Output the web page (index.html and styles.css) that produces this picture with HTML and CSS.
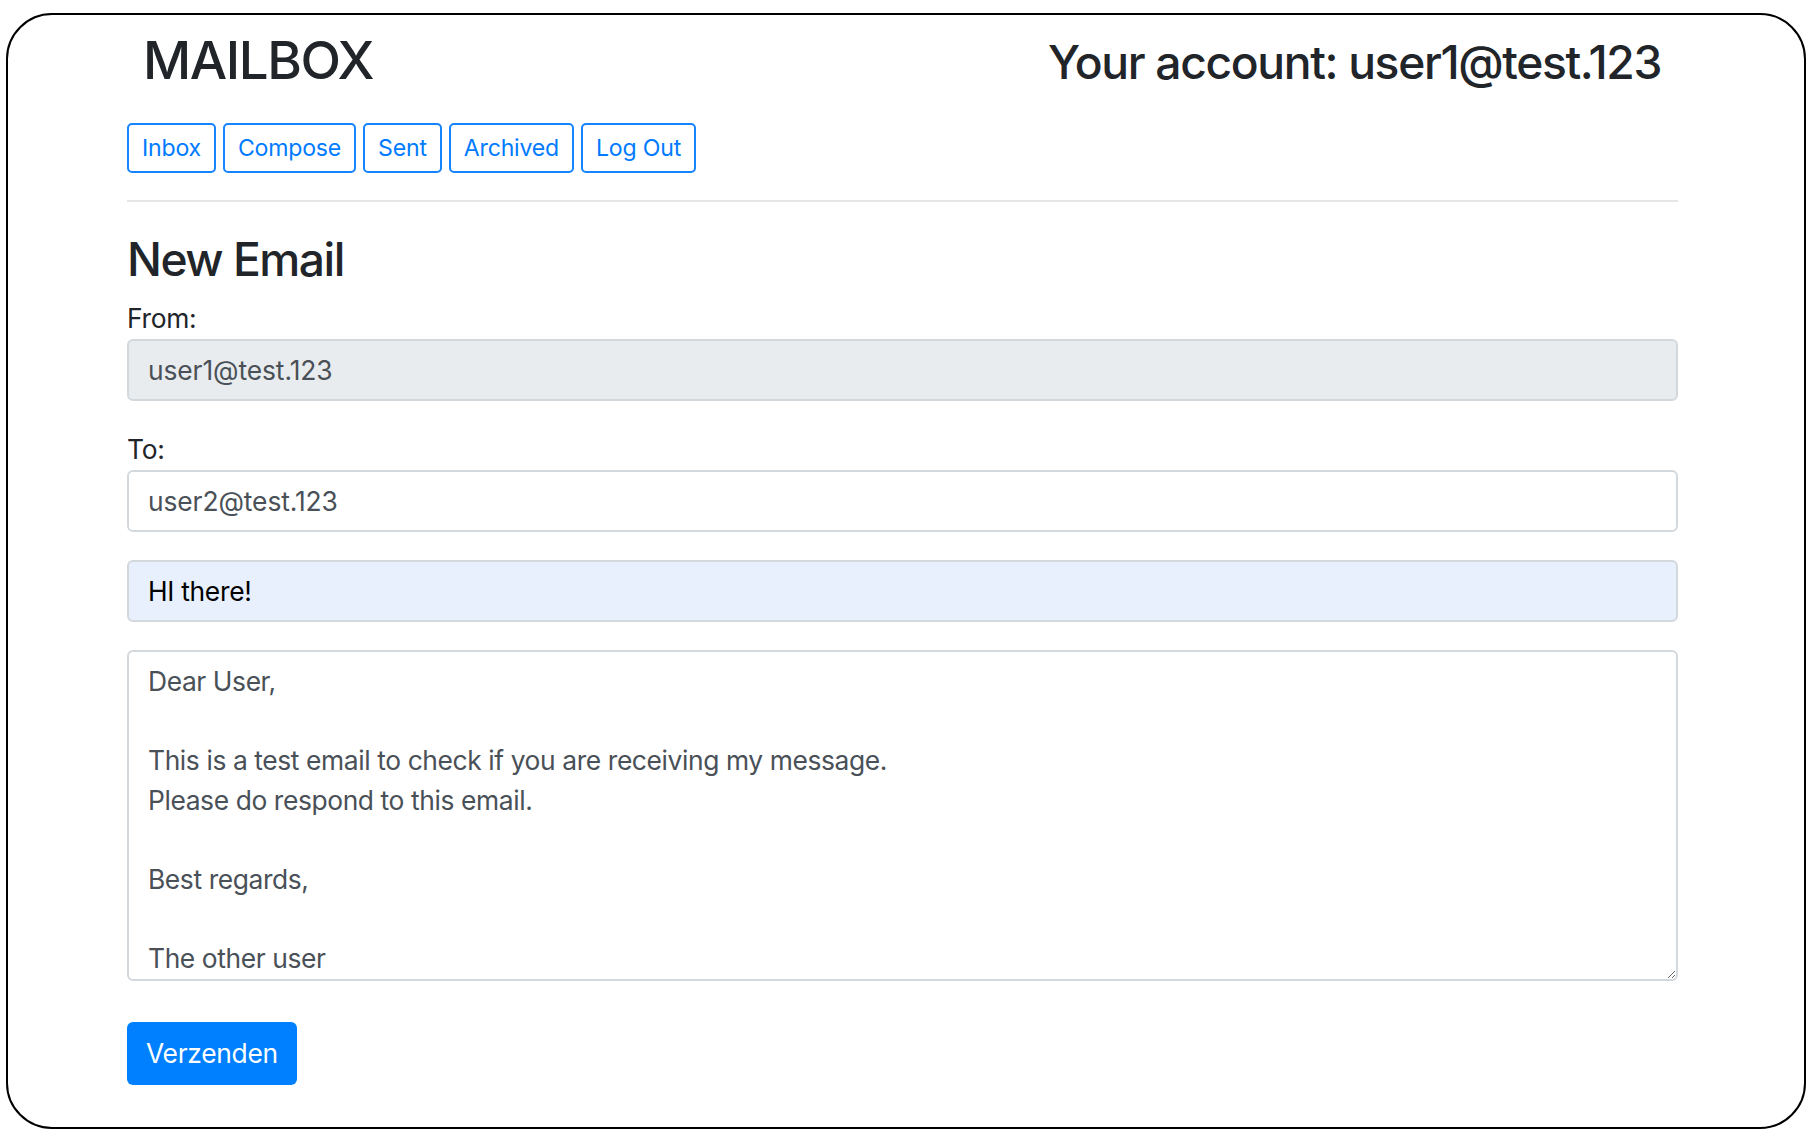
FILE: index.html
```html
<!DOCTYPE html>
<html lang="en">
<head>
<meta charset="utf-8">
<title>Mailbox</title>
<link rel="stylesheet" href="styles.css">
</head>
<body>
<div class="frame">
  <div class="container">
    <header class="top">
      <h2 class="brand">MAILBOX</h2>
      <h3 class="account">Your account: user1@test.123</h3>
    </header>
    <nav class="nav">
      <button class="btn-outline" type="button">Inbox</button>
      <button class="btn-outline" type="button">Compose</button>
      <button class="btn-outline" type="button">Sent</button>
      <button class="btn-outline" type="button">Archived</button>
      <button class="btn-outline" type="button">Log Out</button>
    </nav>
    <hr class="divider">
    <h3 class="title">New Email</h3>
    <form class="compose">
      <div class="group">
        <label class="label">From:</label>
        <input class="field field-disabled" disabled value="user1@test.123">
      </div>
      <div class="group">
        <label class="label">To:</label>
        <input class="field" value="user2@test.123">
      </div>
      <div class="group">
        <input class="field field-autofill" value="HI there!">
      </div>
      <div class="group group-body">
        <textarea class="field field-body">Dear User,

This is a test email to check if you are receiving my message.
Please do respond to this email.

Best regards,

The other user</textarea>
      </div>
      <button class="btn-primary" type="button">Verzenden</button>
    </form>
  </div>
</div>
</body>
</html>
```

FILE: styles.css
```css
* { box-sizing: border-box; }

html, body {
  margin: 0;
  padding: 0;
  background: #fff;
}

body {
  font-family: Inter, "Liberation Sans", sans-serif;
  color: #212529;
  font-size: 26.4px;
  line-height: 1.5;
}

.frame {
  margin: 13px 0 0 6px;
  width: 1800px;
  height: 1116px;
  border: 2px solid #000;
  border-radius: 46px;
  background: #fff;
  overflow: hidden;
}

.container {
  margin-left: 119px;
  width: 1551px;
  padding-top: 14px;
}

.top {
  display: flex;
  justify-content: space-between;
  align-items: baseline;
  padding: 0 17px 0 16px;
  margin-bottom: 31px;
}

.brand {
  margin: 0;
  font-size: 52.8px;
  line-height: 1.2;
  font-weight: 500;
  letter-spacing: -1.4px;
  color: #212529;
}

.account {
  margin: 0;
  font-size: 46.2px;
  line-height: 1.2;
  font-weight: 500;
  letter-spacing: -1.35px;
  color: #212529;
}

.nav {
  display: flex;
  gap: 7px;
}

.btn-outline {
  font-family: inherit;
  font-size: 23.1px;
  line-height: 34px;
  letter-spacing: -0.2px;
  padding: 6px 13px;
  border: 2px solid #1683ff;
  border-radius: 5px;
  background: #fff;
  color: #007bff;
  cursor: pointer;
}

.divider {
  margin: 27px 0 0 0;
  border: 0;
  border-top: 2px solid #e6e6e6;
  height: 0;
}

.title {
  margin: 29.5px 0 11px 0;
  font-size: 46.2px;
  line-height: 1.2;
  font-weight: 500;
  letter-spacing: -1.5px;
  color: #212529;
}

.compose {
  margin: 0;
}

.group {
  margin-bottom: 28px;
}

.group-body {
  margin-bottom: 41px;
}

.label {
  display: block;
  line-height: 40px;
  margin-bottom: 1px;
  letter-spacing: -0.3px;
  color: #212529;
}

.field {
  display: block;
  width: 100%;
  height: 62px;
  padding: 10px 19px;
  font-family: inherit;
  font-size: 26.4px;
  line-height: 39.6px;
  letter-spacing: -0.1px;
  color: #495057;
  background: #fff;
  border: 2px solid #d3d8dd;
  border-radius: 6px;
  outline: none;
}

.field-disabled {
  background: #e9ecef;
  opacity: 1;
}

.field-autofill {
  background: #e8f0fe;
  color: #000;
  letter-spacing: -0.3px;
}

.field-body {
  height: 331px;
  resize: vertical;
  overflow: hidden;
  white-space: pre-wrap;
  letter-spacing: -0.4px;
}

.btn-primary {
  display: inline-block;
  height: 63px;
  padding: 0 19px;
  font-family: inherit;
  font-size: 26.4px;
  line-height: 39.6px;
  letter-spacing: -0.3px;
  color: #fff;
  background: #0080ff;
  border: 0;
  border-radius: 6px;
  cursor: pointer;
}
```
